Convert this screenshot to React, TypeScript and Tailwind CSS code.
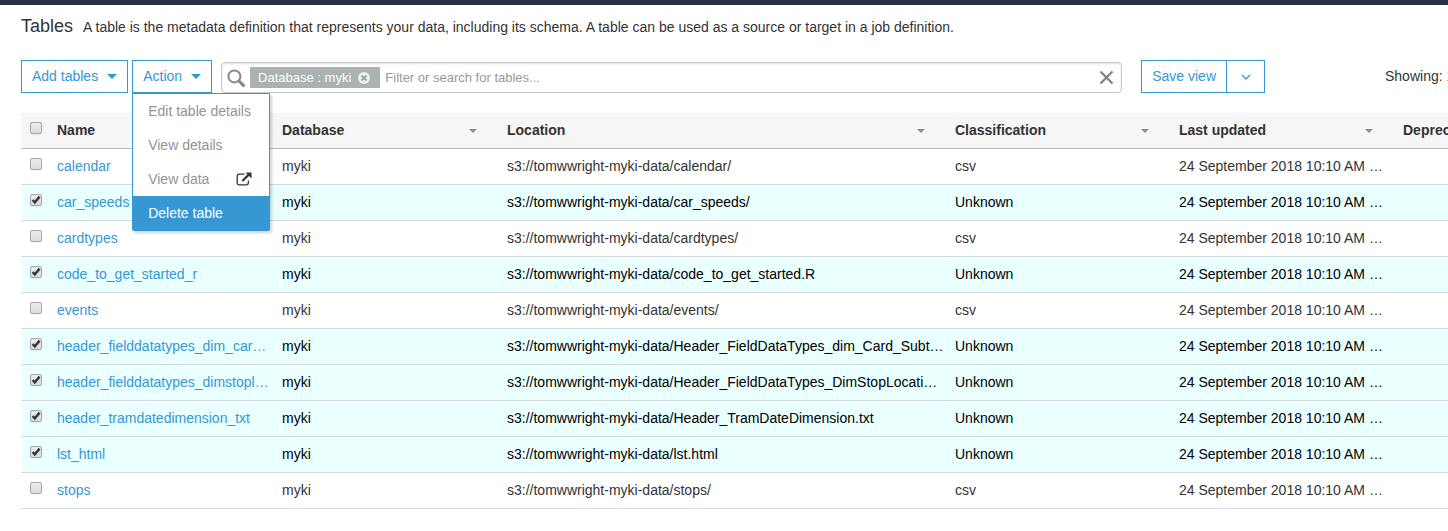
import React from "react";

type Row = {
  name: string;
  location: string;
  classification: string;
  selected: boolean;
};

const UPDATED = "24 September 2018 10:10 AM …";

const rows: Row[] = [
  { name: "calendar", location: "s3://tomwwright-myki-data/calendar/", classification: "csv", selected: false },
  { name: "car_speeds", location: "s3://tomwwright-myki-data/car_speeds/", classification: "Unknown", selected: true },
  { name: "cardtypes", location: "s3://tomwwright-myki-data/cardtypes/", classification: "csv", selected: false },
  { name: "code_to_get_started_r", location: "s3://tomwwright-myki-data/code_to_get_started.R", classification: "Unknown", selected: true },
  { name: "events", location: "s3://tomwwright-myki-data/events/", classification: "csv", selected: false },
  { name: "header_fielddatatypes_dim_car…", location: "s3://tomwwright-myki-data/Header_FieldDataTypes_dim_Card_Subt…", classification: "Unknown", selected: true },
  { name: "header_fielddatatypes_dimstopl…", location: "s3://tomwwright-myki-data/Header_FieldDataTypes_DimStopLocati…", classification: "Unknown", selected: true },
  { name: "header_tramdatedimension_txt", location: "s3://tomwwright-myki-data/Header_TramDateDimension.txt", classification: "Unknown", selected: true },
  { name: "lst_html", location: "s3://tomwwright-myki-data/lst.html", classification: "Unknown", selected: true },
  { name: "stops", location: "s3://tomwwright-myki-data/stops/", classification: "csv", selected: false },
];

function Caret({ className }: { className: string }) {
  return (
    <svg viewBox="0 0 10 5" className={className} fill="currentColor" aria-hidden="true">
      <path d="M0 0h10L5 5z" />
    </svg>
  );
}

function Checkbox({ label, checked = false }: { label: string; checked?: boolean }) {
  return (
    <span className="grid w-3 pb-1">
      <input
        type="checkbox"
        aria-label={label}
        defaultChecked={checked}
        className="peer col-start-1 row-start-1 m-0 size-3 appearance-none rounded-xs border border-[#a6a6a6] bg-linear-to-b from-[#ececec] to-[#dcdcdc] shadow-xs"
      />
      <svg
        viewBox="0 0 12 12"
        className="pointer-events-none invisible col-start-1 row-start-1 size-3 peer-checked:visible"
        fill="none"
        stroke="#3a3a3a"
        strokeWidth="2.5"
        aria-hidden="true"
      >
        <path d="M2.6 6 4.8 8.4 9.6 2.6" />
      </svg>
    </span>
  );
}

function HeaderCell({ children, sortable = false }: { children: string; sortable?: boolean }) {
  return (
    <th scope="col" className="px-0 pt-0 pb-0.5 text-left font-bold whitespace-nowrap">
      <div className="flex items-center justify-between pr-[30px]">
        <span>{children}</span>
        {sortable && <Caret className="mt-0.5 h-1 w-2 shrink-0 text-[#8c8c8c]" />}
      </div>
    </th>
  );
}

function ActionMenu() {
  const item = "flex h-[34px] w-full items-center px-[15px] text-left";
  return (
    <ul className="absolute top-full left-0 z-10 w-[138px] rounded-b-xs border border-[#3797d3] bg-white text-[#949494] shadow-[2px_2px_3px_rgba(0,0,0,0.18)]">
      <li>
        <button type="button" className={item}>Edit table details</button>
      </li>
      <li>
        <button type="button" className={item}>View details</button>
      </li>
      <li>
        <button type="button" className="flex h-[34px] w-full items-center justify-between pr-[17px] pl-[15px] text-left">
          View data
          <svg viewBox="0 0 16 14" className="h-3.5 w-4 text-[#333]" fill="none" stroke="currentColor" aria-hidden="true">
            <path d="M8.5 2.2H3A1.8 1.8 0 0 0 1.2 4v7A1.8 1.8 0 0 0 3 12.8h7.6a1.8 1.8 0 0 0 1.8-1.8V8.6" strokeWidth="1.3" />
            <path d="M6.4 9 13 2.4" strokeWidth="2.2" />
            <path d="M9.6.5h5.9v5.9z" fill="currentColor" stroke="none" />
          </svg>
        </button>
      </li>
      <li>
        <button type="button" className="flex h-[34px] w-full items-center bg-[#3797d3] px-[15px] text-left text-white">
          Delete table
        </button>
      </li>
    </ul>
  );
}

export default function App() {
  return (
    <div className="overflow-hidden bg-white font-['Liberation_Sans',Arial,sans-serif] text-sm text-[#333]">
      <div className="h-[5px] bg-[#26323f]" />
      <main className="pl-[21px]">
        <header className="flex items-baseline gap-2.5 pt-[7px] whitespace-nowrap">
          <h1 className="text-lg leading-7">Tables</h1>
          <p>
            A table is the metadata definition that represents your data, including its schema. A table can be used as a
            source or target in a job definition.
          </p>
        </header>

        <div className="mt-5 flex h-[34px] items-start">
          <button type="button" className="flex h-[33px] items-center gap-[9px] border border-[#3797d3] px-2.5 pb-0.5 whitespace-nowrap text-[#3797d3]">
            Add tables
            <Caret className="mt-0.5 h-[5px] w-2.5" />
          </button>
          <div className="relative ml-1">
            <button type="button" aria-expanded="true" className="flex h-[33px] items-center gap-[9px] border border-[#3797d3] px-2.5 pb-0.5 text-[#3797d3]">
              Action
              <Caret className="mt-0.5 h-[5px] w-2.5" />
            </button>
            <ActionMenu />
          </div>

          <div className="mt-0.5 ml-[9px] flex h-[31px] min-w-0 flex-1 items-center rounded-sm border border-[#c3c7c7] pr-[7px] pl-[5px] text-[13px] shadow-[inset_0_1px_2px_rgba(0,0,0,0.12)]">
            <svg viewBox="0 0 18 18" className="size-[18px] shrink-0 text-[#878787]" fill="none" stroke="currentColor" aria-hidden="true">
              <circle cx="7.4" cy="7.4" r="6" strokeWidth="2" />
              <path d="m12 12 4.4 4.4" strokeWidth="3" strokeLinecap="round" />
            </svg>
            <span className="ml-[5px] flex h-[21px] shrink-0 items-center gap-[7px] bg-[#aab2b2] pr-2.5 pl-2 text-white">
              <span className="pt-px">Database : myki</span>
              <button type="button" aria-label="Remove filter" className="size-3">
                <svg viewBox="0 0 12 12" className="size-3" aria-hidden="true">
                  <circle cx="6" cy="6" r="6" fill="#eef0f0" />
                  <path d="m3.5 3.5 5 5m0-5-5 5" stroke="#9aa3a3" strokeWidth="1.8" />
                </svg>
              </button>
            </span>
            <input
              type="text"
              aria-label="Filter or search for tables"
              placeholder="Filter or search for tables..."
              className="ml-[5px] min-w-0 flex-1 pt-px outline-none placeholder:text-[#999]"
            />
            <button type="button" aria-label="Clear search" className="text-[#808080]">
              <svg viewBox="0 0 15 15" className="size-[15px]" fill="none" stroke="currentColor" strokeWidth="2.2" aria-hidden="true">
                <path d="m1.5 1.5 12 12m0-12-12 12" />
              </svg>
            </button>
          </div>

          <div className="ml-[19px] flex h-[33px] shrink-0 divide-x divide-[#3797d3] border border-[#3797d3] text-[#3797d3]">
            <button type="button" className="px-2.5 pb-0.5 whitespace-nowrap">Save view</button>
            <button type="button" aria-label="More view options" className="flex w-[37px] items-center justify-center">
              <svg viewBox="0 0 10 6" className="h-1.5 w-2.5" fill="none" stroke="currentColor" strokeWidth="1.4" aria-hidden="true">
                <path d="m1 1 4 4 4-4" />
              </svg>
            </button>
          </div>
          <p className="ml-[120px] w-[63px] shrink-0 leading-8 whitespace-nowrap">Showing: 1 - 10</p>
        </div>

        <table className="mt-[19px] w-full table-fixed border-separate border-spacing-0">
          <colgroup>
            <col className="w-9" />
            <col className="w-[225px]" />
            <col className="w-[225px]" />
            <col className="w-[448px]" />
            <col className="w-[224px]" />
            <col className="w-[224px]" />
            <col />
          </colgroup>
          <thead>
            <tr className="h-9 bg-[#f6f6f6] *:border-b *:border-[#bbb]">
              <th scope="col" className="pt-0 pr-0 pb-0.5 pl-[9px]">
                <Checkbox label="Select all tables" />
              </th>
              <HeaderCell>Name</HeaderCell>
              <HeaderCell sortable>Database</HeaderCell>
              <HeaderCell sortable>Location</HeaderCell>
              <HeaderCell sortable>Classification</HeaderCell>
              <HeaderCell sortable>Last updated</HeaderCell>
              <HeaderCell>Deprecated</HeaderCell>
            </tr>
          </thead>
          <tbody>
            {rows.map((row) => (
              <tr
                key={row.name}
                className={
                  row.selected
                    ? "h-9 bg-[#eaffff] whitespace-nowrap text-black *:border-b *:border-[#d5dbdb]"
                    : "h-9 whitespace-nowrap *:border-b *:border-[#d5dbdb]"
                }
              >
                <td className="pt-0 pr-0 pb-0.5 pl-[9px]">
                  <Checkbox label={`Select ${row.name}`} checked={row.selected} />
                </td>
                <td className="px-0 pt-0 pb-0.5">
                  <a href="#" className="text-[#3797d3]">{row.name}</a>
                </td>
                <td className="px-0 pt-0 pb-0.5">myki</td>
                <td className="px-0 pt-0 pb-0.5">{row.location}</td>
                <td className="px-0 pt-0 pb-0.5">{row.classification}</td>
                <td className="px-0 pt-0 pb-0.5">{UPDATED}</td>
                <td className="p-0" />
              </tr>
            ))}
          </tbody>
        </table>
      </main>
    </div>
  );
}
